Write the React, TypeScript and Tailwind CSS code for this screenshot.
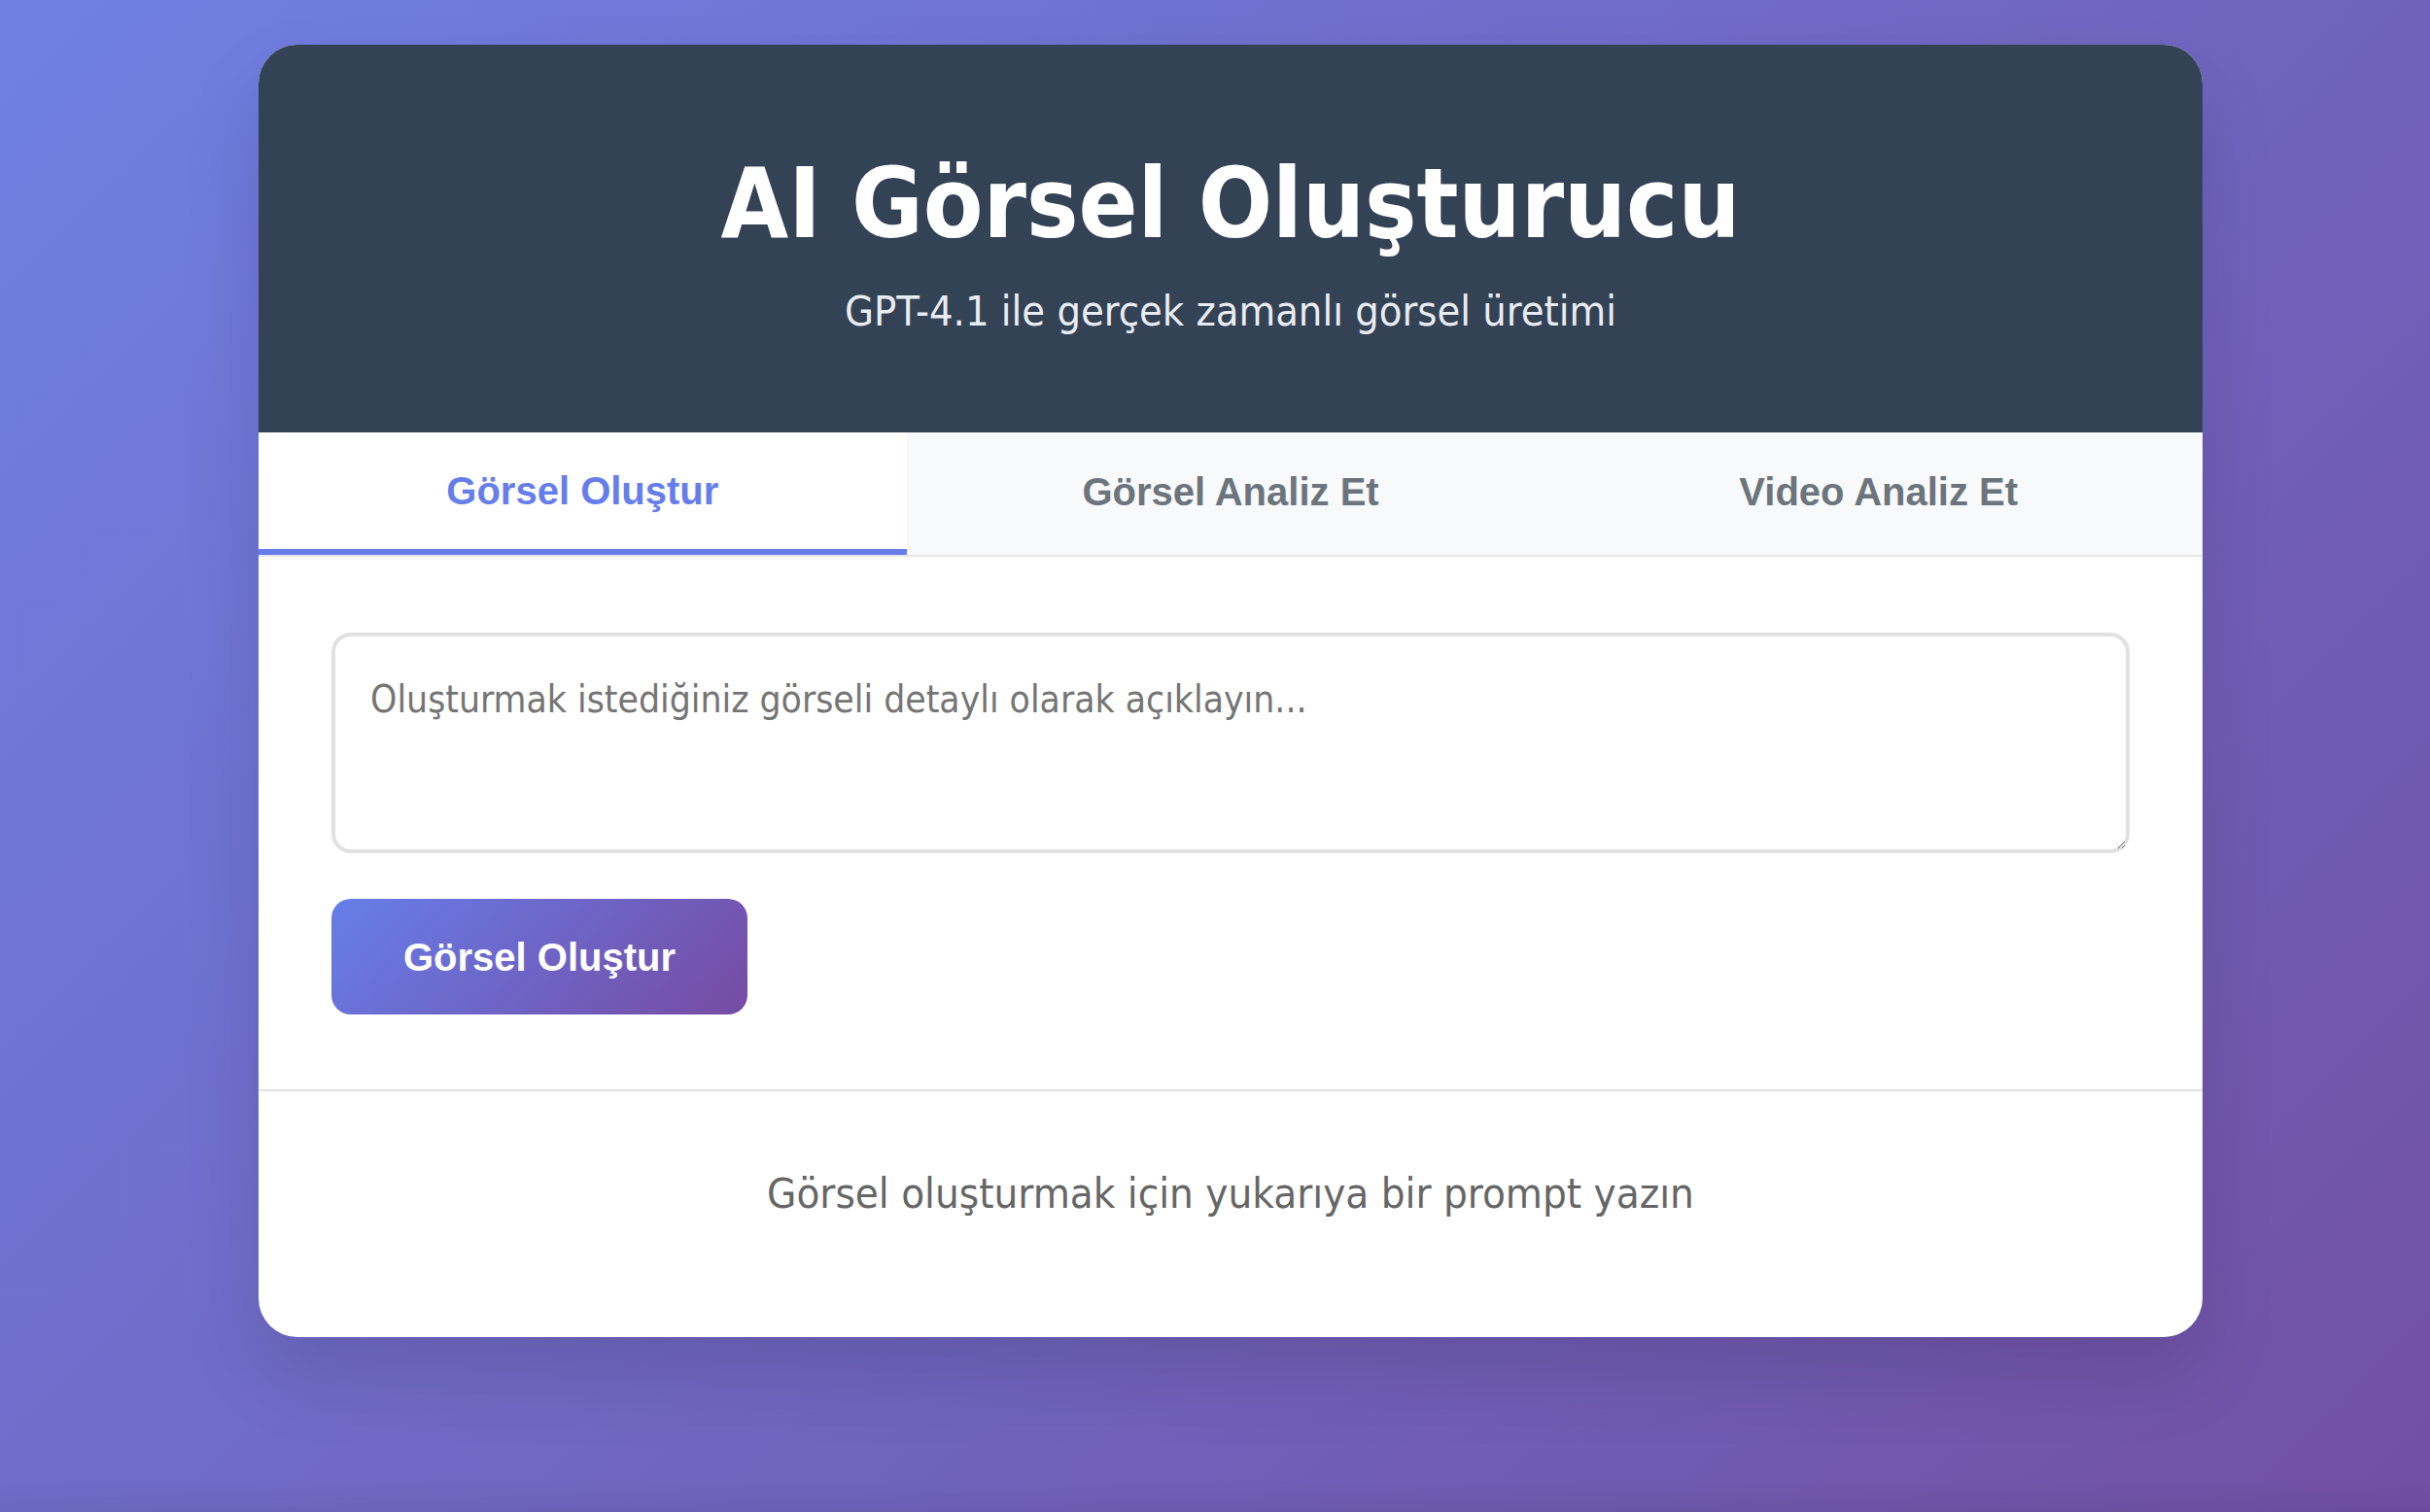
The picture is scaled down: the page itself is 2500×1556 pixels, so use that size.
import { useState } from 'react'

const tabs = ['Görsel Oluştur', 'Görsel Analiz Et', 'Video Analiz Et']

const tahoma = "font-['DejaVu_Sans_Condensed','DejaVu_Sans',sans-serif] font-stretch-condensed"
const arial = "font-['Liberation_Sans',Arial,sans-serif]"

const App = () => {
  const [active, setActive] = useState(0)
  const [prompt, setPrompt] = useState('')

  return (
    <div className="min-h-screen bg-[linear-gradient(to_bottom,transparent_calc(100%-36px),rgba(0,0,0,0.06)),linear-gradient(135deg,#6f80e3_0%,#7150a4_100%)] pt-[46px] pl-[32px] flex justify-center items-start">
      <div className="w-[2000px] bg-white rounded-[40px] overflow-hidden shadow-[0_40px_80px_rgba(0,0,0,0.12)]">
        <div className={`bg-[#344256] text-center pt-[104px] pb-[99px] ${tahoma}`}>
          <h1 className="text-white font-bold text-[100px] leading-[120px]">AI Görsel Oluşturucu</h1>
          <p className="mt-[24px] text-[#e9ecf0] text-[43px] leading-[52px]">GPT-4.1 ile gerçek zamanlı görsel üretimi</p>
        </div>

        <div className="flex border-b-2 border-[#e4e6ea]">
          {tabs.map((t, i) => (
            <button
              key={t}
              onClick={() => setActive(i)}
              className={`flex-1 h-[126px] flex items-center justify-center font-bold text-[40px] ${arial} ${
                i === active
                  ? 'bg-white text-[#667eea] border-b-[6px] border-[#667eea]'
                  : 'bg-[#f8f9fa] text-[#6c757d] pb-[4px]'
              }`}
            >
              {t}
            </button>
          ))}
        </div>

        <div className="px-[75px] pt-[78px] pb-[77px] border-b-2 border-[#e2e2e2]">
          <textarea
            value={prompt}
            onChange={(e) => setPrompt(e.target.value)}
            placeholder="Oluşturmak istediğiniz görseli detaylı olarak açıklayın..."
            className={`block w-full h-[227px] border-4 border-[#e1e1e1] rounded-[20px] px-[36px] pt-[38px] text-[38.7px] leading-[54px] text-[#333] placeholder:text-[#757575] outline-none ${tahoma}`}
          />
          <button
            className={`mt-[47px] h-[119px] px-[74px] rounded-[20px] bg-[linear-gradient(135deg,#667eea_0%,#764ba2_100%)] text-white font-bold text-[40px] ${arial}`}
          >
            Görsel Oluştur
          </button>
        </div>

        <div className={`pt-[79px] pb-[122px] text-center text-[#666] text-[43.5px] leading-[52px] ${tahoma}`}>
          Görsel oluşturmak için yukarıya bir prompt yazın
        </div>
      </div>
    </div>
  )
}

export default App
